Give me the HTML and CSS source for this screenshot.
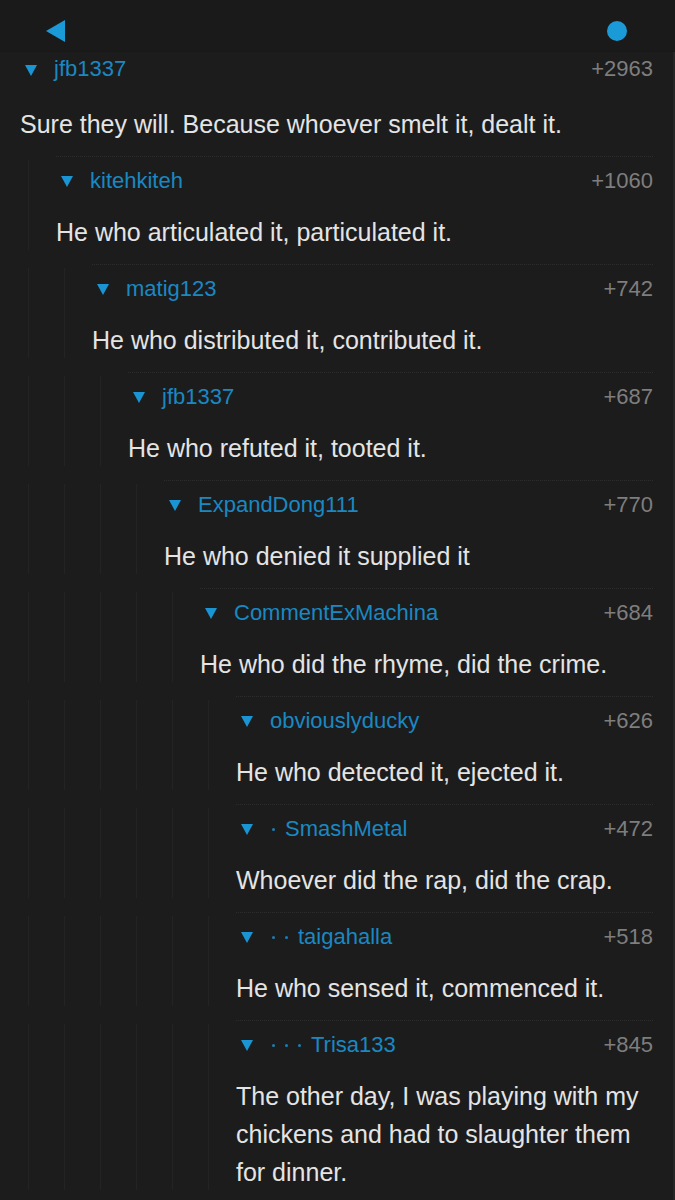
FILE: index.html
```html
<!DOCTYPE html>
<html>
<head>
<meta charset="utf-8">
<link rel="stylesheet" href="styles.css">
</head>
<body>
<div class="topbar">
  <svg class="back" width="19" height="22" viewBox="0 0 19 22"><polygon points="19,0 19,22 0,11" fill="#1b9ad8"/></svg>
  <span class="dot"></span>
</div>
<div class="list">
  <div class="row first">
    <div class="content">
      <div class="head"><span class="tri"></span><span class="name">jfb1337</span><span class="score">+2963</span></div>
      <div class="body">Sure they will. Because whoever smelt it, dealt it.</div>
    </div>
  </div>
  <div class="row">
    <span class="guide"></span>
    <div class="content">
      <div class="head"><span class="tri"></span><span class="name">kitehkiteh</span><span class="score">+1060</span></div>
      <div class="body">He who articulated it, particulated it.</div>
    </div>
  </div>
  <div class="row">
    <span class="guide"></span><span class="guide"></span>
    <div class="content">
      <div class="head"><span class="tri"></span><span class="name">matig123</span><span class="score">+742</span></div>
      <div class="body">He who distributed it, contributed it.</div>
    </div>
  </div>
  <div class="row">
    <span class="guide"></span><span class="guide"></span><span class="guide"></span>
    <div class="content">
      <div class="head"><span class="tri"></span><span class="name">jfb1337</span><span class="score">+687</span></div>
      <div class="body">He who refuted it, tooted it.</div>
    </div>
  </div>
  <div class="row">
    <span class="guide"></span><span class="guide"></span><span class="guide"></span><span class="guide"></span>
    <div class="content">
      <div class="head"><span class="tri"></span><span class="name">ExpandDong111</span><span class="score">+770</span></div>
      <div class="body">He who denied it supplied it</div>
    </div>
  </div>
  <div class="row">
    <span class="guide"></span><span class="guide"></span><span class="guide"></span><span class="guide"></span><span class="guide"></span>
    <div class="content">
      <div class="head"><span class="tri"></span><span class="name">CommentExMachina</span><span class="score">+684</span></div>
      <div class="body">He who did the rhyme, did the crime.</div>
    </div>
  </div>
  <div class="row">
    <span class="guide"></span><span class="guide"></span><span class="guide"></span><span class="guide"></span><span class="guide"></span><span class="guide"></span>
    <div class="content">
      <div class="head"><span class="tri"></span><span class="name">obviouslyducky</span><span class="score">+626</span></div>
      <div class="body">He who detected it, ejected it.</div>
    </div>
  </div>
  <div class="row">
    <span class="guide"></span><span class="guide"></span><span class="guide"></span><span class="guide"></span><span class="guide"></span><span class="guide"></span>
    <div class="content">
      <div class="head"><span class="tri"></span><span class="dots"><i></i></span><span class="name">SmashMetal</span><span class="score">+472</span></div>
      <div class="body">Whoever did the rap, did the crap.</div>
    </div>
  </div>
  <div class="row">
    <span class="guide"></span><span class="guide"></span><span class="guide"></span><span class="guide"></span><span class="guide"></span><span class="guide"></span>
    <div class="content">
      <div class="head"><span class="tri"></span><span class="dots"><i></i><i></i></span><span class="name">taigahalla</span><span class="score">+518</span></div>
      <div class="body">He who sensed it, commenced it.</div>
    </div>
  </div>
  <div class="row">
    <span class="guide"></span><span class="guide"></span><span class="guide"></span><span class="guide"></span><span class="guide"></span><span class="guide"></span>
    <div class="content">
      <div class="head"><span class="tri"></span><span class="dots"><i></i><i></i><i></i></span><span class="name">Trisa133</span><span class="score">+845</span></div>
      <div class="body">The other day, I was playing with my chickens and had to slaughter them for dinner.</div>
    </div>
  </div>
</div>
</body>
</html>
```

FILE: styles.css
```css
html, body {
  margin: 0;
  padding: 0;
  background: #1c1c1c;
}
body {
  font-family: "Liberation Sans", Arial, sans-serif;
  width: 675px;
  height: 1200px;
  overflow: hidden;
}
.topbar {
  height: 51px;
  background: #1a1a1a;
  border-bottom: 1px solid #181818;
  display: flex;
  align-items: flex-start;
  justify-content: space-between;
  padding: 0 48px 0 46px;
}
.back {
  margin-top: 20px;
  display: block;
}
.dot {
  width: 20px;
  height: 20px;
  border-radius: 50%;
  background: #1b9ad8;
  margin-top: 21px;
}
.list {
  border-right: 2px solid #262626;
}
.row {
  display: flex;
  padding: 0 20px 0 20px;
}
.guide {
  width: 36px;
  flex: none;
  display: flex;
}
.guide::before {
  content: "";
  width: 1px;
  margin: 4px 0 14px 8px;
  background: #232323;
}
.content {
  flex: 1;
  min-width: 0;
  border-top: 1px dotted #2c2c2c;
}
.row.first .content {
  border-top: none;
}
.head {
  height: 47px;
  display: flex;
  align-items: center;
  font-size: 22px;
}
.row.first .head {
  height: 34px;
}
.tri {
  width: 0;
  height: 0;
  border-left: 6px solid transparent;
  border-right: 6px solid transparent;
  border-top: 11px solid #1b94d3;
  margin: 2px 17px 0 5px;
  flex: none;
}
.dots {
  display: flex;
  align-items: center;
  margin: 2px 0 0 2px;
}
.dots i {
  width: 3px;
  height: 3px;
  border-radius: 50%;
  background: #1780b8;
  margin-right: 10px;
}
.name {
  color: #1a88c2;
}
.score {
  margin-left: auto;
  color: #7e7e7e;
}
.body {
  color: #e4e4e4;
  font-size: 25px;
  line-height: 38px;
  padding: 9px 0 13px;
}
.row.first .body {
  padding-top: 19px;
}
```
